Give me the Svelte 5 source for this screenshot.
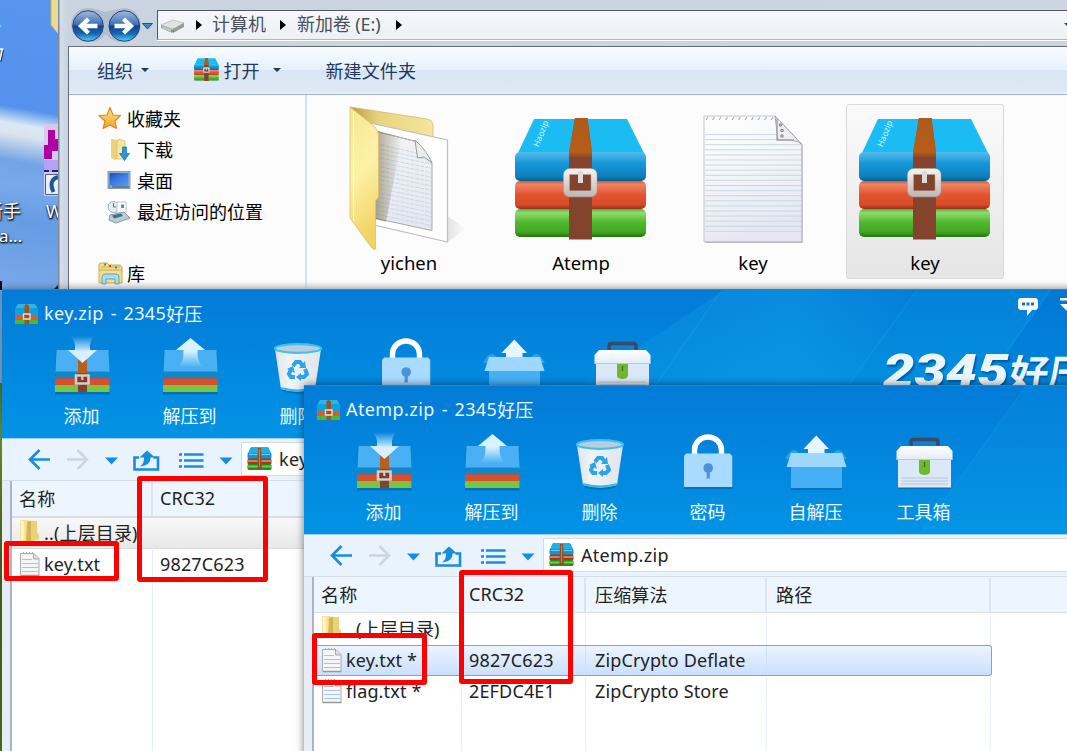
<script>
  const files = [
    { name: 'yichen', kind: 'folder' },
    { name: 'Atemp', kind: 'zip' },
    { name: 'key', kind: 'text' },
    { name: 'key', kind: 'zip', selected: true }
  ];
  const places = [
    { label: '下载', kind: 'download' },
    { label: '桌面', kind: 'desktop' },
    { label: '最近访问的位置', kind: 'recent' }
  ];
  const tools = [
    { label: '添加', kind: 'add' },
    { label: '解压到', kind: 'extract' },
    { label: '删除', kind: 'delete' },
    { label: '密码', kind: 'lock' },
    { label: '自解压', kind: 'sfx' },
    { label: '工具箱', kind: 'toolbox' }
  ];
  const archives = [
    {
      id: 'first',
      file: 'key.zip',
      columns: ['名称', 'CRC32'],
      rows: [
        { name: '..(上层目录)', up: true, cells: [''], state: 'hover' },
        { name: 'key.txt', cells: ['9827C623'] }
      ]
    },
    {
      id: 'second',
      file: 'Atemp.zip',
      columns: ['名称', 'CRC32', '压缩算法', '路径'],
      rows: [
        { name: '..(上层目录)', up: true, cells: ['', '', ''] },
        { name: 'key.txt *', cells: ['9827C623', 'ZipCrypto Deflate', ''], state: 'selected' },
        { name: 'flag.txt *', cells: ['2EFDC4E1', 'ZipCrypto Store', ''] }
      ]
    }
  ];
</script>

{#snippet books(w, h)}
  <svg width={w} height={h} viewBox="0 0 132 122" preserveAspectRatio="none">
    <path d="M19 1H112L130 37H2Z" fill="#1abcf3" />
    <rect y="34" width="131" height="29" rx="5" fill="url(#bookBlue)" />
    <rect y="63" width="131" height="28" rx="5" fill="url(#bookRed)" />
    <rect y="91" width="131" height="28" rx="5" fill="url(#bookGreen)" />
    <path d="M60 0H72.500L77 36V121.500H54V36Z" fill="#84432c" />
    <path d="M60 0H72.500L77 34V40H54V34Z" fill="url(#strapTop)" />
    <rect x="51.500" y="53.500" width="27.500" height="22.500" rx="3" fill="none" stroke="#a99" stroke-width="6.500" />
    <rect x="51.500" y="53.500" width="27.500" height="22" rx="3" fill="none" stroke="url(#metal)" stroke-width="5.500" />
    <path d="M63 53H68V65H63Z" fill="#dedad6" />
    {#if w > 60}
      <text x="23.500" y="29.500" transform="rotate(-68 23.5 29.5)" class="brand">Haozip</text>
    {/if}
  </svg>
{/snippet}

{#snippet smallBooks()}
  <svg width="25" height="24" viewBox="0 0 25 24">
    <path d="M4 .5H21L24 7H1Z" fill="#22b0e4" stroke="#128ab9" stroke-width=".6" />
    <rect x=".5" y="6" width="24" height="6" rx="1.500" fill="#1793cf" /><path d="M2 7.500H23" stroke="#69d0f5" />
    <rect x=".5" y="11.500" width="24" height="6" rx="1.500" fill="#9c3d22" /><path d="M1 14H24" stroke="#e2775a" stroke-width="2" />
    <rect x=".5" y="17" width="24" height="6" rx="1.500" fill="#2a8a1c" /><path d="M1 19.500H24" stroke="#6ed04a" stroke-width="2" />
    <path d="M11 1H14L15 23H10.500Z" fill="#8b5228" /><path d="M12.500 2V20" stroke="#c9853d" />
  </svg>
{/snippet}

{#snippet fileIcon(kind)}
  {#if kind === 'zip'}
    <div class="zipwrap">{@render books(132, 122)}</div>
  {:else if kind === 'text'}
    <svg width="158" height="146" viewBox="0 0 158 146">
      <path d="M30.500 12.500H101L128 40V138H30.500Z" fill="#777" opacity=".5" transform="translate(.8 1)" />
      <path d="M30 12H101L127.500 39V137.500H30Z" fill="url(#paper)" stroke="#c3c7ca" />
      {#each Array(20) as _, i}
        <path d="M31 {30.500 + i * 5.100}H{i < 2 ? 103 : 127}" stroke="#c6dae4" stroke-width="1" />
      {/each}
      {#each Array(11) as _, i}
        <path d="M{32 + i * 6.500} 16l2 -3" stroke="#a8acb0" stroke-width="1.100" />
      {/each}
      <path d="M101 10.500L130 10.500V39L127.500 39Z" fill="#fcfcfc" />
      <path d="M101 12L127.500 40Q122 35 104 36Z" fill="#efeff1" stroke="#a4a7aa" />
      <path d="M103 15V36H120" fill="none" stroke="#a2a5a8" stroke-width="1.500" />
      <g fill="none" stroke="#85898d" stroke-width="1.200"><circle cx="106.500" cy="21" r="1.200" /><circle cx="108" cy="26.500" r="1.200" /><circle cx="108" cy="32" r="1.200" /></g>
    </svg>
  {:else}
    <svg width="158" height="156" viewBox="330 100 158 156">
      <path d="M447.500 242L466 229L447.500 216Z" fill="url(#castShadow)" />
      <path d="M350 107L427 119Q433 120 433 126V150H360Z" fill="url(#folderBack)" stroke="#d0bd67" stroke-width=".8" />
      <path d="M370 123L447.500 140V242L370 224Z" fill="#fff" stroke="#bfbfbf" stroke-width="1.200" />
      <path d="M374 131L415 141L432 163V230.500L374 218Z" fill="url(#paperShade)" stroke="#a5a8ab" />
      {#each Array(17) as _, i}
        <path d="M376 {144 + i * 4.400}L431 {i < 2 ? 156 + i * 4.400 : 155 + i * 4.400}" stroke="#bdd4df" stroke-width=".8" stroke-dasharray="4 1" />
      {/each}
      <path d="M378 132L414 141" stroke="#aaa" stroke-width="1.600" stroke-dasharray="1 3" />
      <path d="M415 140L417.500 158L424 157L432 163Q427 151 415 140Z" fill="#ececec" stroke="#999" />
      <path d="M378 131L402 137L386 222L375 219Z" fill="url(#folderShadow)" />
      <path d="M350 107L374 126Q378.500 130 378.500 135V197L375.500 201V249Q374 251 371 247L350 218Z" fill="url(#folderFront)" stroke="#d8c06d" stroke-width=".8" />
      <path d="M353.500 112V221" stroke="#fffad0" stroke-width="1" opacity=".9" />
    </svg>
  {/if}
{/snippet}

{#snippet placeIcon(kind)}
  <svg width="24" height="24" viewBox="0 0 24 24">
    {#if kind === 'download'}
      <path d="M4 1L12 2V20L8 22L4 20Z" fill="#ecd27b" /><path d="M12 1L18 3V21H10V5Z" fill="#f8e6a2" stroke="#d8bc66" stroke-width=".7" />
      <path d="M15.500 9H19.500V15.500H22.500L17.500 22.500L12.500 15.500H15.500Z" fill="#2a96df" stroke="#1a6eae" stroke-width=".7" />
    {:else if kind === 'desktop'}
      <rect x="1" y="2.500" width="22" height="17" fill="#9fb2cc" stroke="#8a9ab0" /><rect x="2.500" y="4" width="19" height="13" fill="url(#screen)" /><path d="M2 18H22" stroke="#536a88" stroke-width="1.500" /><circle cx="4" cy="17.500" r="1.300" fill="#5fd09e" />
    {:else}
      <circle cx="6.500" cy="7" r="5.500" fill="#e6edf4" stroke="#9aabba" /><path d="M6.500 3V7H9" stroke="#687887" fill="none" />
      <path d="M10 2H19V13H10Z" fill="#fff" stroke="#b6c3cf" /><path d="M14 4.500H17V8H14Z" fill="#4b8bd6" />
      <path d="M3 15L17 12L23 18L9 23L2 20Z" fill="#c2cad2" stroke="#8b96a2" /><path d="M5 15.500L14 13.500L16 16L7 18.500Z" fill="#277a98" />
    {/if}
  </svg>
{/snippet}

{#snippet toolIcon(kind)}
  <svg class="toolicon" width="64" height="62" viewBox="-2 0 64 62">
    {#if kind === 'add' || kind === 'extract'}
      <path d="M4 15H56.500L57.500 58H3Z" fill="#003f78" opacity=".35" transform="translate(0 1.500)" />
      <path d="M4.500 15H56.500L57.500 38H3.500Z" fill="#4ab0f4" />
      <path d="M3.500 36.500H57.500V43.500H3.500Z" fill="#1187c9" />
      <path d="M3 43.300H57.500V50H3Z" fill="#d84f2f" />
      <path d="M3 50H57.500V57H3Z" fill="#7ac440" />
      {#if kind === 'add'}
        <path d="M26 26H35V57H26Z" fill="#864228" /><path d="M26 24H35V38H26Z" fill="#b5601c" />
        <path d="M24 40.500H36.500V48.500H24Z" fill="#7f3b24" stroke="#d2cfcd" stroke-width="2.600" /><path d="M30.300 40V45" stroke="#d2cfcd" stroke-width="2.200" />
        <path d="M17 1Q24 4 23 15H16L30.500 28L45 15H38Q37 4 44 1Z" fill="url(#downArrow)" />
      {:else}
        <path d="M30.500 3L45 15H37.500Q37 27 43 32H18Q24 27 23.500 15H16Z" fill="url(#upArrow)" />
      {/if}
    {:else if kind === 'delete'}
      <path d="M8 15L14 55Q30 61 46 55L52 15Z" fill="#00437d" opacity=".35" transform="translate(0 1)" />
      <path d="M7 14L13 54Q30 59 47 54L53 14Z" fill="url(#bin)" /><path d="M13 53Q30 58 47 53" fill="none" stroke="#38b9f3" stroke-width="2" />
      <ellipse cx="30" cy="13.500" rx="23" ry="4.300" fill="#b9cddb" stroke="#3ec0f5" stroke-width="2.200" />
      <g fill="none" stroke="#2ca5e8" stroke-width="4">
        <path d="M25 31L28 27H32L34 30M37 34L39 39L36 42H32M27 42H23L21 39L23 34" />
      </g>
      <g fill="#2ca5e8"><path d="M31 33L38 33L37 26Z" /><path d="M33 38V46L28 42Z" /><path d="M19 34L25 31L27 38Z" /></g>
    {:else if kind === 'lock'}
      <path d="M16 25V19.500A14 14.500 0 0 1 44 19.500V25" fill="none" stroke="#005291" opacity=".5" stroke-width="5.500" transform="translate(0 1)" />
      <path d="M16.500 24V19A13.500 13 0 0 1 43.500 19V24" fill="none" stroke="#fff" stroke-width="5.500" />
      <rect x="6" y="26" width="48.500" height="32" fill="#00417b" opacity=".3" /><path d="M8 22.500H52L54.300 25V56H6V25Z" fill="#a8dbff" />
      <circle cx="30.200" cy="37" r="4.800" fill="#4b91dc" /><path d="M30.200 39V47.500" stroke="#4b91dc" stroke-width="3" />
    {:else if kind === 'sfx'}
      <path d="M13 22Q6 14 -1 28H61Q54 14 47 22Z" fill="#46b2f3" opacity=".6" />
      <rect x="5" y="38" width="51" height="21" fill="#00417b" opacity=".3" />
      <path d="M30.300 4.500L43 18H38.500V28H22V18H17.500Z" fill="#e7f6ff" />
      <path d="M5 35H56V57H5Z" fill="#47aff4" /><path d="M5 22H56L60.500 36H.5Z" fill="#9ed8ff" />
    {:else}
      <path d="M17 17V11Q17 8.500 20 8.500H41Q44 8.500 44 11V17" fill="none" stroke="#3d4a5f" stroke-width="3.500" />
      <rect x="4" y="29" width="53" height="29" fill="#00417b" opacity=".35" /><path d="M4 28H57V56.500H4Z" fill="#dae8f7" />
      <path d="M7 15H54L58.500 20V29H2.500V20Z" fill="url(#lid)" /><path d="M3 28.500H58" stroke="#bac8d8" stroke-width="1" />
      <path d="M25 29H36V41Q35 44 30.500 44T25 41Z" fill="#6fb92c" /><path d="M30.500 31V36" stroke="#3f7219" stroke-width="1.400" />
      <path d="M7 47H54M7 50H54M7 53H54" stroke="#b9c7d6" stroke-width="1" />
    {/if}
  </svg>
{/snippet}

{#snippet rowIcon(up)}
  {#if up}
    <svg width="22" height="26" viewBox="0 0 22 26"><path d="M1 1H10V22H1Z" fill="#f5e397" /><path d="M10 2H18V13L20 16V20L10 23Z" fill="#ead377" /><path d="M8 3L12 1.500V23.500L7 22Z" fill="#c9ab4c" opacity=".8" /><path d="M2 2H5V21H2Z" fill="#fff6c2" /></svg>
  {:else}
    <svg width="22" height="26" viewBox="0 0 22 26"><path d="M1.500 2.500H15L20 7.500V24.500H1.500Z" fill="#f3f5f6" stroke="#a8acaf" /><path d="M3 3L5 1M6 3L8 1M9 3L11 1M12 3L14 1" stroke="#aaa" /><path d="M14.500 3V8H20" fill="#ddd" stroke="#aaa" /><path d="M3 8.500H13M3 12.500H19M3 16.500H19M3 20.500H19" stroke="#a9c6d6" /><path d="M2 24.500H20.500" stroke="#999" stroke-width="1.500" /></svg>
  {/if}
{/snippet}

<svg class="defs" width="0" height="0">
  <defs>
    <linearGradient id="bookBlue" x2="0" y2="1"><stop stop-color="#55bdec" /><stop offset=".4" stop-color="#1597d9" /><stop offset=".85" stop-color="#0d80bc" /><stop offset="1" stop-color="#0b5c8b" /></linearGradient>
    <linearGradient id="bookRed" x2="0" y2="1"><stop stop-color="#cf5a3e" /><stop offset=".12" stop-color="#f08365" /><stop offset=".48" stop-color="#e4552f" /><stop offset=".85" stop-color="#d84a28" /><stop offset="1" stop-color="#8f3219" /></linearGradient>
    <linearGradient id="bookGreen" x2="0" y2="1"><stop stop-color="#5caa3c" /><stop offset=".13" stop-color="#8fdc6c" /><stop offset=".48" stop-color="#4fb92d" /><stop offset=".82" stop-color="#43a623" /><stop offset="1" stop-color="#28720f" /></linearGradient>
    <linearGradient id="strapTop" x2="0" y2="1"><stop stop-color="#ae5b1d" /><stop offset=".85" stop-color="#b85d16" /><stop offset="1" stop-color="#84432c" /></linearGradient>
    <linearGradient id="metal" x2="0" y2="1"><stop stop-color="#f1efed" /><stop offset="1" stop-color="#c4bdb7" /></linearGradient>
    <linearGradient id="paper" x2=".3" y2="1"><stop stop-color="#fff" /><stop offset=".5" stop-color="#f4f5f8" /><stop offset="1" stop-color="#e6e7f2" /></linearGradient>
    <linearGradient id="paperShade" x2="0" y2="1"><stop stop-color="#f1f3f4" /><stop offset="1" stop-color="#e5e6f1" /></linearGradient>
    <linearGradient id="folderBack"><stop stop-color="#b59c42" /><stop offset=".35" stop-color="#e8d47e" /><stop offset="1" stop-color="#f6e69e" /></linearGradient>
    <linearGradient id="folderFront" x2=".2" y2="1"><stop stop-color="#f7e793" /><stop offset=".5" stop-color="#fdf2a8" /><stop offset="1" stop-color="#f2d263" /></linearGradient>
    <linearGradient id="folderShadow"><stop stop-color="#75663e" stop-opacity=".55" /><stop offset="1" stop-color="#75663e" stop-opacity="0" /></linearGradient>
    <linearGradient id="castShadow"><stop stop-color="#000" stop-opacity=".1" /><stop offset="1" stop-color="#000" stop-opacity="0" /></linearGradient>
    <linearGradient id="screen" x2="1" y2="1"><stop stop-color="#1e50b9" /><stop offset=".5" stop-color="#3c7ee6" /><stop offset="1" stop-color="#5b9bf0" /></linearGradient>
    <linearGradient id="lid" x2="0" y2="1"><stop stop-color="#fff" /><stop offset="1" stop-color="#e2eaf3" /></linearGradient>
    <linearGradient id="rayEdge"><stop stop-color="#1ab2ee" stop-opacity="0" /><stop offset=".7" stop-color="#1ab2ee" stop-opacity=".3" /><stop offset="1" stop-color="#1ab2ee" stop-opacity=".05" /></linearGradient>
    <linearGradient id="downArrow" x2="0" y2="1"><stop stop-color="#d9f1ff" stop-opacity="0" /><stop offset=".6" stop-color="#d9f1ff" /></linearGradient>
    <linearGradient id="upArrow" x2="0" y2="1"><stop offset=".45" stop-color="#daf1ff" /><stop offset="1" stop-color="#daf1ff" stop-opacity="0" /></linearGradient>
    <linearGradient id="bin"><stop stop-color="#dce4ea" /><stop offset=".3" stop-color="#f1f3f5" /><stop offset="1" stop-color="#dfe5ea" /></linearGradient>
    <linearGradient id="orb" x2="0" y2="1"><stop stop-color="#a1bbdd" /><stop offset=".46" stop-color="#3a6fb5" /><stop offset=".5" stop-color="#12438f" /><stop offset=".75" stop-color="#1666b8" /><stop offset="1" stop-color="#4ed9fa" /></linearGradient>
    <linearGradient id="star" x2="0" y2="1"><stop stop-color="#ffe690" /><stop offset="1" stop-color="#f9a01e" /></linearGradient>
  </defs>
</svg>

<main class="desktop">
  <aside class="wallpaper">
    <svg width="60" height="290" viewBox="0 0 60 290">
      <path d="M51 0H60V36L55 30L51 25Z" fill="#eedb92" /><path d="M51 0V25L55 30" stroke="#c5ae60" fill="none" />
      <circle cx="0" cy="26" r="1.500" fill="#57d5ef" />
      <path d="M0 49H2.500L0 60" fill="none" stroke="#fff" stroke-width="1.600" /><path d="M1 62L3.500 50" stroke="#421" />
      <path d="M44 124H60V196H44Z" fill="#d4cbea" /><path d="M48 130H55V139H60V151H52V159H44V145H48Z" fill="#b000a5" />
      <path d="M44 160H60V172H44Z" fill="#b0a5f2" /><path d="M44 171H49M52 171H58" stroke="#25236f" stroke-width="2" />
      <path d="M45.500 174.500H60V194.500H45.500Z" fill="#e9eef5" stroke="#555c83" /><path d="M58 177Q48 180 53.500 192" fill="none" stroke="#1f5591" stroke-width="4" />
      <path d="M0 281H2V290H0Z" fill="#000" /><path d="M54 289L58 285V290Z" fill="#123" />
    </svg>
    <span class="dlabel one">新手</span><span class="dlabel two">a...</span><span class="dlabel three">W</span>
  </aside>

  <section class="explorer">
    <header class="address-row">
      <svg class="orbs" width="88" height="40" viewBox="68 5 88 40">
        <path d="M88 8Q96 8 104 12Q114 10 124 8A17 17 0 0 1 124 42Q110 42 106 34Q101 42 88 42A17 17 0 0 1 88 8Z" fill="#aab8c9" opacity=".8" />
        <circle cx="88" cy="26" r="15.300" fill="url(#orb)" stroke="#27446e" /><circle cx="124.300" cy="26" r="15.300" fill="url(#orb)" stroke="#27446e" />
        <path d="M97.500 26H82M88.500 19L81 26L88.500 33" fill="none" stroke="#fff" stroke-width="4.300" />
        <path d="M114.500 26H130M123.500 19L131 26L123.500 33" fill="none" stroke="#fff" stroke-width="4.300" />
        <path d="M142.500 23.500H152.500L147.500 29Z" fill="#3a8cc0" stroke="#274d78" />
      </svg>
      <div class="address">
        <svg width="28" height="20" viewBox="0 0 28 20"><path d="M2 9L14 4L25 7L14 13Z" fill="#e2e2e2" stroke="#aaa" stroke-width=".6" /><path d="M2 9V12L13 17V13ZM14 13L25 7V11L14 17Z" fill="#9b9b9b" /><path d="M3 10L12 13V16L3 12Z" fill="#c6c6c6" /><circle cx="14" cy="15" r="1.400" fill="#4cb648" /></svg>
        <i class="chev"></i><span class="crumb c1">计算机</span><i class="chev"></i><span class="crumb c2">新加卷 (E:)</span><i class="chev"></i>
        <i class="tri end"></i>
      </div>
    </header>
    <div class="ex-body">
      <nav class="commands">
        <span>组织</span><i class="tri"></i>
        <span class="open">{@render books(25, 23)}打开</span><i class="tri t2"></i>
        <span class="new">新建文件夹</span>
      </nav>
      <div class="panes">
        <aside class="tree">
          <div class="root">
            <svg width="24" height="24" viewBox="0 0 24 24"><path d="M12 .5L15 8L22.500 8.500L17 14L18.500 21.500L12 18L5 21.500L7 14L1 8.500L9 8Z" fill="url(#star)" stroke="#d9822b" stroke-width="1.100" stroke-linejoin="round" /></svg>
            <span>收藏夹</span>
          </div>
          {#each places as p}
            <div class="place">{@render placeIcon(p.kind)}<span>{p.label}</span></div>
          {/each}
          <div class="root library">
            <svg width="26" height="24" viewBox="0 0 26 24"><path d="M1 3Q1 1 3 1H9L11 3H22Q24 4 24 6V21H1Z" fill="#f5df8f" stroke="#c8a94c" /><path d="M3 5H22M2 8H24" stroke="#c6a651" /><path d="M6 2.500H8" stroke="#3aa23a" stroke-width="2" /><path d="M11 4H13" stroke="#d33" stroke-width="2" /><path d="M17 5.500H19" stroke="#28d" stroke-width="2" /><path d="M4 22V15Q4 12 7 12H18Q21 12 21 15V22H17V17H8V22Z" fill="#aadcf2" stroke="#5da3c2" /></svg>
            <span>库</span>
          </div>
        </aside>
        <div class="files">
          {#each files as f}
            <div class="tile" class:selected={f.selected}>
              <div class="pic">{@render fileIcon(f.kind)}</div>
              <span class="fname">{f.name}</span>
            </div>
          {/each}
        </div>
      </div>
    </div>
  </section>

  {#each archives as a}
    <section class="zip {a.id}">
      <header class="banner">
        <svg class="rays" width="1065" height="149" viewBox="0 0 1065 149">
          {#if a.id === 'first'}
            <path d="M722 0H915L808 149H500Z" fill="url(#rayEdge)" />
            <path d="M915 0H1050L943 149H808Z" fill="#13b1eb" opacity=".13" />
            <path d="M1050 0H1065V149H945Z" fill="#0162c4" opacity=".12" />
            <path d="M720 0L616 149M915 0L808 149M1048 0L943 149" stroke="#6bd0ff" opacity=".16" />
          {:else}
            <path d="M722 0H1065V149H616Z" fill="#1ab2ee" opacity=".1" /><path d="M722 0L616 149" stroke="#6bd0ff" opacity=".14" />
          {/if}
        </svg>
        <div class="title">
          <svg width="23" height="20" viewBox="0 0 23 20"><path d="M3 0H20L23 5H0Z" fill="#31b4df" /><path d="M0 4H23V11H0Z" fill="#12a0d7" /><path d="M0 11H23V15.500H0Z" fill="#e2562d" /><path d="M0 15.500H23V20H0Z" fill="#4cb92d" /><path d="M9.500 2Q11.500 -2 14 2V20H9.500Z" fill="#9c5522" /><path d="M8.500 10H15V15H8.500Z" fill="#945229" stroke="#e9e2dc" stroke-width="1.400" /></svg>
          <span class="tname">{a.file}</span><span class="dash">-</span><span class="num">2345</span><span>好压</span>
        </div>
        <div class="tools">
          {#each tools as t}
            <div class="tool">{@render toolIcon(t.kind)}<span>{t.label}</span></div>
          {/each}
        </div>
        {#if a.id === 'first'}
          <svg class="chat" width="50" height="22" viewBox="1017 296 50 22"><path d="M1020 298H1036L1038 300V308L1036 310H1032L1027 316V310H1020L1018 308V300Z" fill="#fff" /><path d="M1022 304H1025M1026.500 304H1029.500M1031 304H1034" stroke="#0b78c8" stroke-width="3" /><path d="M1060 298H1075V300.500H1060ZM1060 304H1078L1069 313Z" fill="#fff" /></svg>
          <div class="logo"><span class="digits">2345</span><span class="han">好压</span></div>
        {/if}
      </header>
      <nav class="navbar">
        <svg width="236" height="40" viewBox="0 0 236 40">
          <g fill="none" stroke="#168dde" stroke-width="2.600">
            <path d="M48 20.500H28.500M37.500 11L28 20.500L37.500 30" /><path d="M65 20.500H84.500M75.500 11L85 20.500L75.500 30" stroke="#cfd5dd" />
            <path d="M137 18.500H132.500V30.500H156V18.500H151.500" />
          </g>
          <path d="M103 18.500H116L109.500 25.500ZM217.500 18.500H230.500L224 25.500Z" fill="#168dde" />
          <path d="M145 11.500L153 18.500H148.500Q149 26 138 27.500Q142.500 24 142 18.500H137.500Z" fill="#168dde" />
          <path d="M182 15.500H201.500M182 21.500H201.500M182 27.500H201.500M177 15.500H180M177 21.500H180M177 27.500H180" stroke="#168dde" stroke-width="2.400" />
        </svg>
        <div class="path">{@render smallBooks()}<span>{a.file}</span></div>
      </nav>
      <div class="list">
        <div class="lrow head">
          {#each a.columns as c}<div class="cell">{c}</div>{/each}<div class="rest"></div>
        </div>
        {#each a.rows as r}
          <div class="lrow {r.state ?? ''}">
            <div class="cell name">{@render rowIcon(r.up)}<span class:up={r.up}>{r.name}</span></div>
            {#each r.cells as c}<div class="cell">{c}</div>{/each}
            <div class="rest"></div>
          </div>
        {/each}
        <div class="lrow fill">
          {#each a.columns as c}<div class="cell"></div>{/each}
        </div>
      </div>
    </section>
  {/each}

  <div class="mark m1"></div>
  <div class="mark m2"></div>
  <div class="mark m3"></div>
  <div class="mark m4"></div>
</main>

<style>
  .desktop { position: relative; width: 1067px; height: 751px; overflow: hidden; background: linear-gradient(#8ca6cb 0 383px, #507a1c 383px, #7aa034 440px, #4b6d18 560px, #54791b); font-family: "Noto Sans", "Noto Sans CJK SC", sans-serif; font-size: 18px; color: #000; white-space: nowrap; }
  .desktop * { box-sizing: border-box; }
  svg { display: block; flex: none; }
  .defs { position: absolute; }
  .wallpaper { position: absolute; left: 0; top: 0; width: 60px; height: 328px; background: linear-gradient(190deg, #5795f0 0, #5592ee 34%, #dce9f4 39%, #dbe4ee 42%, #73a4e6 50%, #79a9eb 57%, #659ce4 67%, #85afea 100%); overflow: hidden; }
  .dlabel { position: absolute; color: #fff; text-shadow: 1px 1px 2px #000, 0 1px 2px #000; font-size: 18px; line-height: 24px; }
  .one { left: -15px; top: 199px; }
  .two { left: -1px; top: 224px; font-size: 17px; }
  .three { left: 46px; top: 199px; }

  .explorer { position: absolute; left: 58px; top: 0; width: 1020px; height: 289px; background: linear-gradient(90deg, #7e8999 0, #7e8999 1px, #d4dde8 2px, #c9d4e0 10px, #ccd6e2); }
  .address-row { height: 46px; display: flex; padding: 5px 0 0 10px; }
  .address { margin: 5px 0 0 1px; height: 30px; width: 930px; border: 1px solid #55575e; border-bottom-color: #aeb8c2; background: linear-gradient(#f5f7fa, #edf1f6); display: flex; align-items: center; color: #48515b; position: relative; box-shadow: 0 1px #fff; }
  .address svg { margin: 2px 0 0 1px; }
  .chev { border-left: 6px solid #000; border-top: 5.500px solid transparent; border-bottom: 5.500px solid transparent; margin-left: 9px; }
  .c1 { margin: 0 13px 4px 10px; width: 55px; }
  .c2 { margin: 0 13px 4px 11px; width: 86px; letter-spacing: -.1px; }
  .crumb + .chev { margin-left: 0; }
  .end { position: absolute; right: 5px; top: 12px; }
  .ex-body { margin-left: 10px; border-left: 1px solid #666e79; border-top: 1px solid #666e79; height: 243px; background: #fcfcfc; display: flex; flex-direction: column; }
  .commands { height: 48px; flex: none; display: flex; align-items: center; background: linear-gradient(#fafdff 0, #e5f0fb 23px, #d9e5f4 23px, #dfe9f6); border-bottom: 1px solid #9bb0ca; box-shadow: inset 0 -1px #eff5fb; padding: 0 0 2px 28px; color: #1e395b; }
  .tri { border-top: 4.500px solid #1e395b; border-left: 4px solid transparent; border-right: 4px solid transparent; margin-left: 8px; }
  .open { display: flex; align-items: center; gap: 5px; margin-left: 45px; }
  .open svg { margin-left: -.5px; }
  .t2 { margin-left: 13px; }
  .new { margin-left: 45px; letter-spacing: .1px; }
  .panes { display: flex; flex: 1; background: linear-gradient(#fcfcfc 0, #fcfcfc 186px, #e9e9e9); }
  .tree { width: 238px; border-right: 2px solid #d5e4f5; padding-top: 8px; line-height: 24px; }
  .root { display: flex; height: 31px; align-items: center; padding-left: 29px; gap: 5px; }
  .place { display: flex; height: 31px; align-items: center; padding-left: 38px; gap: 6px; }
  .library { margin-top: 31px; gap: 3px; }
  .files { display: flex; gap: 14px; padding: 9px 0 0 23px; }
  .tile { width: 158px; height: 175px; display: flex; flex-direction: column; align-items: center; border: 1px solid transparent; border-radius: 3px; }
  .selected.tile { background: linear-gradient(#fafafa, #e5e5e5); border-color: #d9d9d9; }
  .pic { height: 145px; width: 158px; margin: -1px -1px 0; display: flex; justify-content: center; align-items: flex-start; overflow: visible; }
  .pic > svg[height="156"] { margin-top: -4px; }
  .zipwrap { margin: 14px 0 0; }
  .brand { font: 8.500px "Noto Sans", sans-serif; fill: #d9f6ff; }
  .fname { font-size: 18.500px; line-height: 28px; }

  .zip { position: absolute; height: 480px; background: #fff; border-top: 1px solid #178cd0; display: flex; flex-direction: column; }
  .first { left: 2px; top: 289px; width: 1075px; box-shadow: 0 0 8px #0006; }
  .second { left: 304px; top: 385px; width: 1075px; box-shadow: 0 0 8px #0008; }
  .banner { height: 149px; flex: none; background: linear-gradient(#027bd7, #0293e5); position: relative; color: #fff; border-bottom: 1px solid #9fd0f3; overflow: hidden; }
  .rays { position: absolute; left: 0; top: 0; }
  .title { position: relative; height: 45px; padding: 2px 0 0 13px; display: flex; align-items: center; color: #eaf6ff; }
  .title svg { margin-right: 6px; }
  .title span { margin-top: -1px; }
  .tname, .num { letter-spacing: .4px; }
  .dash { margin: 0 7px; }
  .tools { position: relative; display: flex; padding-left: 25.500px; }
  .tool { width: 108px; display: flex; flex-direction: column; align-items: center; line-height: 24px; color: #f0f9ff; }
  .tool span { margin-top: 7px; }
  .chat { position: absolute; left: 1015px; top: 6px; }
  .logo { position: absolute; left: 881px; top: 53px; line-height: 56px; display: flex; align-items: center; color: #eaf6fc; text-shadow: 1px 2px 2px #0059a2; }
  .digits { font: italic 900 47px/56px Roboto, sans-serif; transform: scaleX(1.19); transform-origin: 0 0; width: 127px; }
  .han { font: 700 39px/56px "Noto Sans CJK SC", sans-serif; transform: skewX(-9deg); }
  .navbar { height: 42px; flex: none; background: #e9f3fd; display: flex; border-bottom: 1px solid #d5dee8; }
  .path { margin: 3px 0 4px 3px; flex: 1; background: #fff; border: 1px solid #d5dbe8; display: flex; align-items: center; gap: 7px; padding: 0 0 1px 5px; color: #222; letter-spacing: .3px; }
  .path span { margin-top: 1px; }
  .list { border-left: 8px solid #e6edf7; box-shadow: inset 2px 0 #aab4c4; flex: 1; display: flex; flex-direction: column; color: #222; letter-spacing: .15px; }
  .lrow { display: flex; height: 31.500px; flex: none; margin-left: 2px; border-top: 1px solid transparent; border-bottom: 1px solid transparent; }
  .cell { width: 181px; border-right: 1px solid #e4effb; padding-left: 9px; display: flex; align-items: center; height: 100%; padding-bottom: 1px; }
  .cell:first-child { width: 141px; padding-left: 7px; }
  .cell:nth-child(2) { width: 124px; padding-left: 7px; }
  .cell:nth-child(4) { width: 224px; }
  .first .cell:nth-child(2) { width: 240px; }
  .second .cell:first-child { width: 148px; }
  .rest { flex: 1; }
  .head { height: 36px; background: #edf5fe; border-bottom-color: #d8dfe8; }
  .head .cell { border-right: 2px solid #dce4ee; padding-bottom: 2px; }
  .hover { background: linear-gradient(#f8f8f8, #e8e8e8); border-color: #dcdcdc; }
  .hover .cell { border-right-color: transparent; }
  .selected.lrow { background: linear-gradient(#edf5ff, #c9dfff); box-shadow: inset 0 0 0 1px #7da3dc; border: 0; padding: 1px 0; border-radius: 3px; width: 678px; }
  .selected .cell { border-right-color: #cfe1f8; }
  .selected .cell:nth-child(4) { border-right-color: transparent; }
  .fill { flex: 1; }
  .name { gap: 3px; padding-left: 7px; }
  .up { letter-spacing: .15px; }
  .mark { position: absolute; border: 5px solid #fe0000; border-radius: 3px; }
  .m1 { left: 137px; top: 476px; width: 131px; height: 106px; }
  .m2 { left: 4px; top: 541px; width: 115px; height: 40px; }
  .m3 { left: 459px; top: 570px; width: 114px; height: 114px; }
  .m4 { left: 312px; top: 633px; width: 115px; height: 52px; }
</style>
